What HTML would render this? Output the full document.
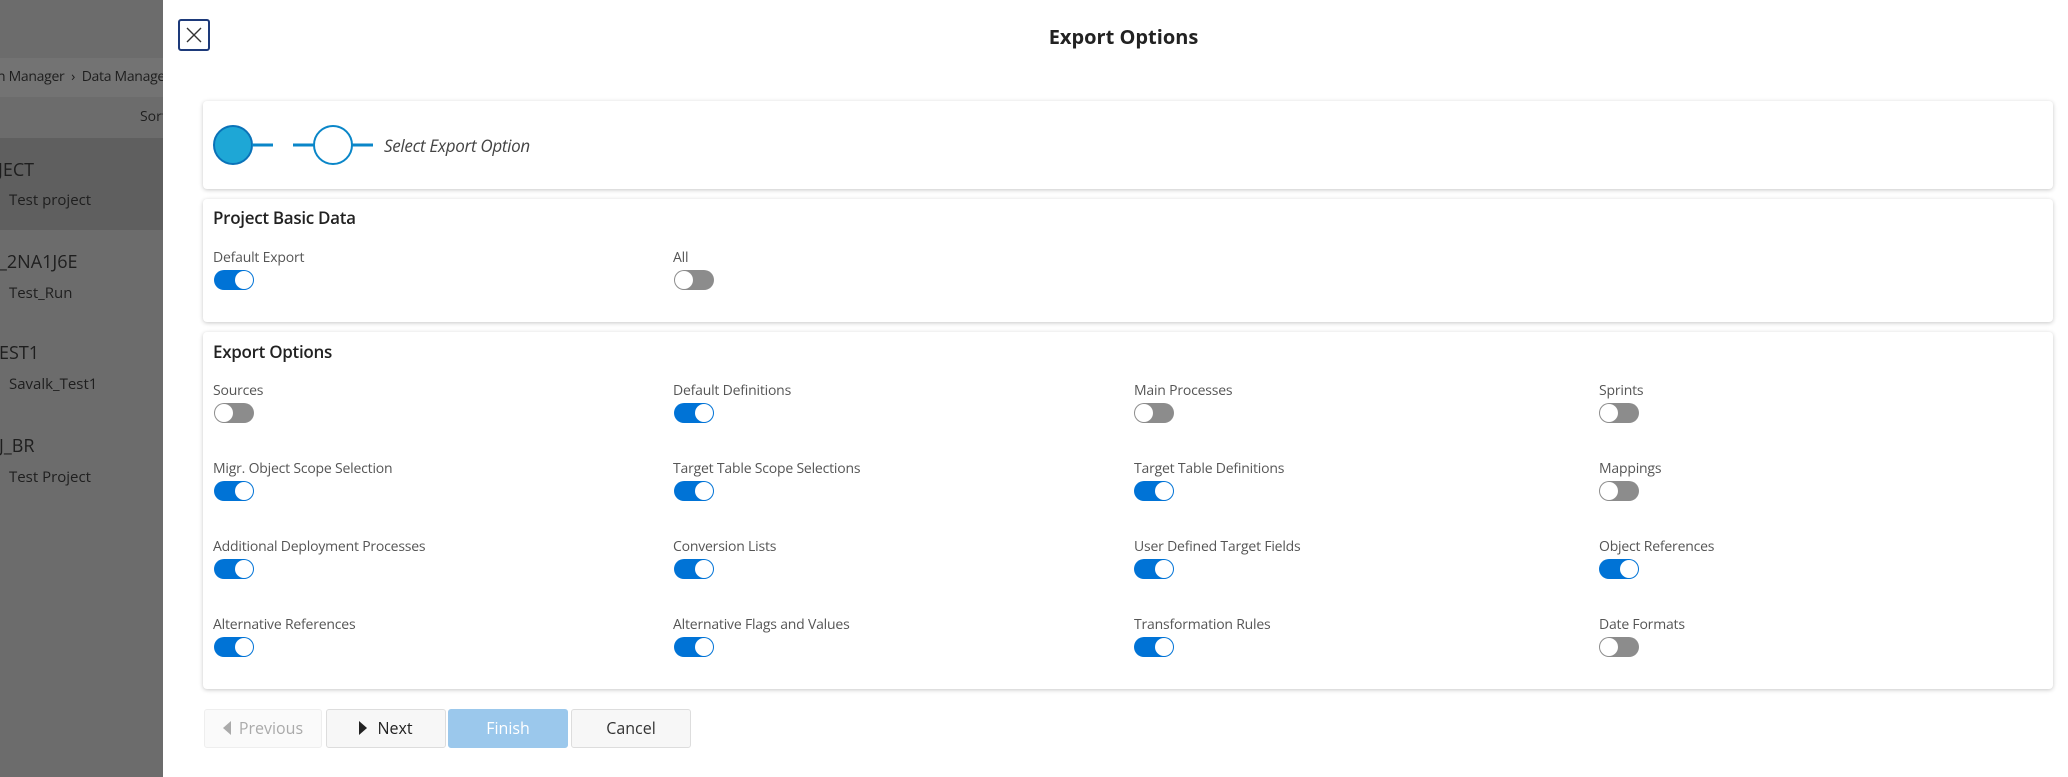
<!DOCTYPE html>
<html><head><meta charset="utf-8"><style>
*{box-sizing:border-box;margin:0;padding:0}
body{width:2068px;height:777px;overflow:hidden;background:#fff;font-family:"Open Sans","Liberation Sans",sans-serif;position:relative;color:#333}
.ov{position:absolute;left:0;top:0;width:163px;height:777px;background:#6c6c6c;overflow:hidden;color:#1e1e1e}
.ov div{position:absolute;white-space:nowrap}
.ab{position:absolute}
.card{position:absolute;left:203px;width:1850px;background:#fff;border-radius:4px;box-shadow:0 1px 4px rgba(0,0,0,.22)}
.tg{position:absolute;width:40px;height:20px;border-radius:10px;background:#0073d6}
.tg::after{content:"";position:absolute;right:1px;top:1px;width:18px;height:18px;border-radius:50%;background:#fff}
.tg.off{background:#8c8c8c}
.tg.off::after{left:1px;right:auto}
.lb{position:absolute;font-size:14px;letter-spacing:-0.2px;color:#555;white-space:nowrap;line-height:20px}
.h{position:absolute;font-size:17px;font-weight:600;letter-spacing:-0.3px;color:#222;line-height:22px}
.btn{position:absolute;top:709px;height:39px;border:1px solid #ddd;border-radius:3px;background:#f7f7f7;font-size:16px;text-align:center;line-height:37px;color:#333}
</style></head><body>
<div class="ov">
<div style="left:0;top:58px;width:163px;height:39px;background:#737373"></div>
<div style="left:-3px;top:67px;font-size:14px;letter-spacing:-0.3px">n Manager &nbsp;›&nbsp; Data Manage</div>
<div style="left:140px;top:107px;font-size:14px">Sort</div>
<div style="left:0;top:138px;width:163px;height:92px;background:#5f5f5f"></div>
<div style="left:-2px;top:158px;font-size:18px">JECT</div>
<div style="left:9px;top:190px;font-size:15px">Test project</div>
<div style="left:-1px;top:250px;font-size:18px">_2NA1J6E</div>
<div style="left:9px;top:283px;font-size:15px">Test_Run</div>
<div style="left:-1px;top:341px;font-size:18px">EST1</div>
<div style="left:9px;top:374px;font-size:15px">Savalk_Test1</div>
<div style="left:-1px;top:434px;font-size:18px">J_BR</div>
<div style="left:9px;top:467px;font-size:15px">Test Project</div>
</div>
<div class="ab" style="left:178px;top:19px;width:32px;height:32px;border:2px solid #1d3a7a;border-radius:3px">
<svg width="28" height="28" viewBox="0 0 28 28" style="position:absolute;left:0;top:0"><path d="M7 7L21 21M21 7L7 21" stroke="#333" stroke-width="1.4"/></svg></div>
<div class="ab" style="left:0;width:2068px;text-align:center;padding-left:179px;top:23px;font-size:20px;font-weight:bold;color:#222">Export Options</div>

<div class="card" style="top:101px;height:88px">
<svg class="ab" style="left:0;top:0" width="200" height="88"><circle cx="30" cy="44" r="19" fill="#1ea7d6" stroke="#0a72b8" stroke-width="2"/><path d="M49 44H70M90 44H111M149 44H170" stroke="#0a86c8" stroke-width="3"/><circle cx="130" cy="44" r="19" fill="#fff" stroke="#0a86c8" stroke-width="2"/></svg>
<div class="ab" style="left:181px;top:33px;font-size:17px;letter-spacing:-0.3px;font-style:italic;color:#444">Select Export Option</div>
</div>

<div class="card" style="top:199px;height:123px">
<div class="h" style="left:10px;top:8px">Project Basic Data</div>
<div class="lb" style="left:10px;top:49px">Default Export</div><div class="tg" style="left:11px;top:71px"></div>
<div class="lb" style="left:470px;top:49px">All</div><div class="tg off" style="left:471px;top:71px"></div>
</div>

<div class="card" style="top:332px;height:357px">
<div class="h" style="left:10px;top:9px">Export Options</div>
<div class="lb" style="left:10px;top:49px">Sources</div><div class="tg off" style="left:11px;top:71px"></div>
<div class="lb" style="left:470px;top:49px">Default Definitions</div><div class="tg" style="left:471px;top:71px"></div>
<div class="lb" style="left:931px;top:49px">Main Processes</div><div class="tg off" style="left:931px;top:71px"></div>
<div class="lb" style="left:1396px;top:49px">Sprints</div><div class="tg off" style="left:1396px;top:71px"></div>

<div class="lb" style="left:10px;top:127px">Migr. Object Scope Selection</div><div class="tg" style="left:11px;top:149px"></div>
<div class="lb" style="left:470px;top:127px">Target Table Scope Selections</div><div class="tg" style="left:471px;top:149px"></div>
<div class="lb" style="left:931px;top:127px">Target Table Definitions</div><div class="tg" style="left:931px;top:149px"></div>
<div class="lb" style="left:1396px;top:127px">Mappings</div><div class="tg off" style="left:1396px;top:149px"></div>

<div class="lb" style="left:10px;top:205px">Additional Deployment Processes</div><div class="tg" style="left:11px;top:227px"></div>
<div class="lb" style="left:470px;top:205px">Conversion Lists</div><div class="tg" style="left:471px;top:227px"></div>
<div class="lb" style="left:931px;top:205px">User Defined Target Fields</div><div class="tg" style="left:931px;top:227px"></div>
<div class="lb" style="left:1396px;top:205px">Object References</div><div class="tg" style="left:1396px;top:227px"></div>

<div class="lb" style="left:10px;top:283px">Alternative References</div><div class="tg" style="left:11px;top:305px"></div>
<div class="lb" style="left:470px;top:283px">Alternative Flags and Values</div><div class="tg" style="left:471px;top:305px"></div>
<div class="lb" style="left:931px;top:283px">Transformation Rules</div><div class="tg" style="left:931px;top:305px"></div>
<div class="lb" style="left:1396px;top:283px">Date Formats</div><div class="tg off" style="left:1396px;top:305px"></div>
</div>

<div class="btn" style="left:204px;width:118px;color:#aaa;background:#fafafa;border-color:#eee"><svg width="8" height="14" style="vertical-align:-1px;margin-right:8px"><path d="M8 0L0 7L8 14Z" fill="#aaa"/></svg>Previous</div>
<div class="btn" style="left:326px;width:120px;color:#222"><svg width="8" height="14" style="vertical-align:-1px;margin-right:10px"><path d="M0 0L8 7L0 14Z" fill="#222"/></svg>Next</div>
<div class="btn" style="left:448px;width:120px;background:#9bc8ec;border-color:#9bc8ec;color:#fff">Finish</div>
<div class="btn" style="left:571px;width:120px">Cancel</div>
</body></html>
